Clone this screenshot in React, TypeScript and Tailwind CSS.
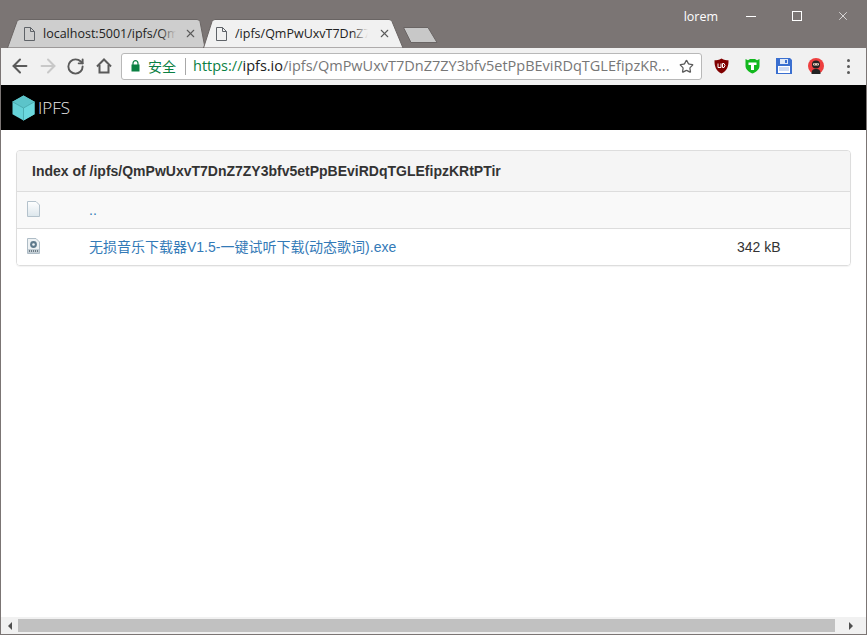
import { ArrowLeft, ArrowRight, RotateCw, Star, X } from 'lucide-react';

function PageIcon() {
  return (
    <svg width="11" height="14" viewBox="0 0 11 14" className="shrink-0" fill="none" stroke="#5f6368" strokeWidth="1">
      <path d="M0.5 0.5H6.5L10.5 4.5V13.5H0.5Z" />
      <path d="M6.5 0.5V4.5H10.5" />
    </svg>
  );
}

function Tab({ title, active }: { title: string; active?: boolean }) {
  return (
    <div className={active ? 'relative z-10 -ml-[2px] flex h-[29px] w-[201px] items-center pl-[13px] pr-[13px]' : 'relative flex h-[29px] w-[198px] items-center pl-[17px] pr-[8px]'}>
      {/* tab outline */}
      <svg className="absolute inset-0 h-full w-full" viewBox={active ? '0 0 201 29' : '0 0 198 29'} preserveAspectRatio="none">
        {active ? (
          <path d="M0.5 29 L9 2.5 Q10 0.5 12 0.5 H186 Q188 0.5 189 2.5 L200 29 Z" fill="#f1f1f1" stroke="#6a6564" />
        ) : (
          <path d="M0.5 29 L10 2.5 Q11 0.5 13 0.5 H190 Q192 0.5 193 2.5 L198 29 Z" fill="#cecece" stroke="#6a6564" />
        )}
      </svg>
      <div className="relative flex min-w-0 flex-1 items-center gap-[8px]">
        <PageIcon />
        <span className={active ? 'relative w-[133px] overflow-hidden whitespace-nowrap pt-[1px] text-[12.5px] text-[#222]' : 'relative w-[135px] overflow-hidden whitespace-nowrap pt-[1px] text-[12.5px] text-[#222]'}>
          {title}
          <span className={active ? 'absolute inset-y-0 right-0 w-4 bg-gradient-to-r from-transparent to-[#f1f1f1]' : 'absolute inset-y-0 right-0 w-4 bg-gradient-to-r from-transparent to-[#cecece]'} />
        </span>
        <X size={13} strokeWidth={2} className="ml-auto shrink-0 text-[#5a5a5a]" />
      </div>
    </div>
  );
}

function NavIcon({ children, width }: { children: React.ReactNode; width: string }) {
  return <div className={`flex shrink-0 items-center justify-center ${width}`}>{children}</div>;
}

function HomeIcon() {
  return (
    <svg width="16" height="16" viewBox="0 0 16 16" fill="none" stroke="#5a5a5a" strokeWidth="2">
      <path d="M1 8.5L8 1.5L15 8.5" />
      <path d="M3.5 7V14.5H12.5V7" />
    </svg>
  );
}

function LockIcon() {
  return (
    <svg width="9" height="12" viewBox="0 0 9 12" className="shrink-0">
      <path d="M2 5V3.2a2.5 2.5 0 0 1 5 0V5" fill="none" stroke="#0b8043" strokeWidth="1.2" />
      <rect x="0.5" y="4.5" width="8" height="7" fill="#0b8043" />
    </svg>
  );
}

function UBlock() {
  return (
    <svg width="15" height="16" viewBox="0 0 15 16">
      <path d="M7.5 0.5C10 2 12.5 2.2 14.5 2.2C14.7 8 13 13 7.5 15.5C2 13 0.3 8 0.5 2.2C2.5 2.2 5 2 7.5 0.5Z" fill="#800000" />
      <path d="M4 5.5V9.5H7V5.5" fill="none" stroke="#fff" strokeWidth="1" />
      <path d="M8.5 5.5H10L11 7.5L10 9.5H8.5Z" fill="none" stroke="#fff" strokeWidth="1" />
    </svg>
  );
}

function TShield() {
  return (
    <svg width="15" height="16" viewBox="0 0 15 16">
      <path d="M0.5 1L3 2.2L5 1H10L12 2.2L14.5 1V8C14.5 11.5 11 14 7.5 15.5C4 14 0.5 11.5 0.5 8Z" fill="#12b81e" />
      <path d="M3.5 4.5H11.5V7H9V12H6V7H3.5Z" fill="#fff" />
    </svg>
  );
}

function Floppy() {
  return (
    <svg width="16" height="16" viewBox="0 0 16 16">
      <path d="M0 0H14L16 2V16H0Z" fill="#3a6fd0" />
      <rect x="4" y="1" width="8" height="5" fill="#dfe8f7" />
      <rect x="9" y="2" width="2" height="3" fill="#3a6fd0" />
      <rect x="2" y="8" width="12" height="7" fill="#fff" />
      <path d="M3 10H13M3 12H13" stroke="#9db6e6" strokeWidth="1" />
    </svg>
  );
}

function Ninja() {
  return (
    <svg width="16" height="16" viewBox="0 0 16 16">
      <circle cx="8" cy="8" r="8" fill="#ee3f3f" />
      <path d="M3.5 16C3.5 12 5 11 8 11C11 11 12.5 12 12.5 16Z" fill="#222" />
      <circle cx="8" cy="6.5" r="4" fill="#222" />
      <rect x="5" y="5.2" width="6" height="2.2" rx="0.8" fill="#f3d9c9" />
      <circle cx="6.6" cy="6.3" r="0.5" fill="#222" />
      <circle cx="9.4" cy="6.3" r="0.5" fill="#222" />
    </svg>
  );
}

function IpfsLogo() {
  return (
    <svg width="23" height="26" viewBox="0 0 23 26" className="shrink-0">
      <path d="M11.5 0.5L22.5 6.8V19.2L11.5 25.5L0.5 19.2V6.8Z" fill="#65d2d8" />
      <path d="M11.5 0.5L22.5 6.8L11.5 13L0.5 6.8Z" fill="#5cc4ca" />
      <path d="M11.5 13V25.5L22.5 19.2V6.8Z" fill="#6bd8de" />
      <path d="M0.5 6.8L11.5 13L22.5 6.8M11.5 13V25.5" fill="none" stroke="#46a4aa" strokeWidth="0.8" />
    </svg>
  );
}

function BlankFile() {
  return (
    <svg width="13" height="16" viewBox="0 0 13 16">
      <defs>
        <linearGradient id="blank" x1="0" y1="0" x2="0" y2="1">
          <stop offset="0" stopColor="#ffffff" />
          <stop offset="1" stopColor="#dce6ec" />
        </linearGradient>
      </defs>
      <path d="M0.5 0.5H9L12.5 4V15.5H0.5Z" fill="url(#blank)" stroke="#b4c2cc" />
    </svg>
  );
}

function ExeFile() {
  return (
    <svg width="13" height="16" viewBox="0 0 13 16">
      <path d="M0.5 0.5H9L12.5 4V15.5H0.5Z" fill="#eef2f4" stroke="#aebcc6" />
      <circle cx="6.5" cy="6.5" r="3.4" fill="#5f7a8c" />
      <circle cx="6.5" cy="6.5" r="1.3" fill="#eef2f4" />
      <rect x="1" y="11" width="11" height="4" fill="#c4ced5" />
      <path d="M2.5 12V14M4.5 12V14M6.5 12V14M8.5 12V14M10.5 12V14" stroke="#55666f" strokeWidth="0.8" />
    </svg>
  );
}

export default function App() {
  return (
    <div className="flex h-[635px] w-[867px] flex-col overflow-hidden border border-[#7b7574] bg-white font-['Liberation_Sans',sans-serif]">
      {/* Title bar */}
      <div className="relative flex h-[47px] shrink-0 items-end bg-[#7b7574] pl-[6px] font-['Open_Sans',sans-serif]">
        <Tab title="localhost:5001/ipfs/Qm" />
        <Tab title="/ipfs/QmPwUxvT7DnZ7" active />
        <svg width="35" height="16" viewBox="0 0 35 16" className="mb-[5px] -ml-[1px]">
          <path d="M0.5 0.5H25L34 15.5H8Z" fill="#c8c8c8" stroke="#6a6564" />
        </svg>
        <div className="absolute right-0 top-0 flex h-[30px] items-center">
          <span className="mr-[10px] mt-[3px] text-[12.5px] text-white">lorem</span>
          <div className="flex w-[46px] justify-center">
            <div className="h-px w-[10px] bg-white" />
          </div>
          <div className="flex w-[46px] justify-center">
            <div className="h-[10px] w-[10px] border border-white" />
          </div>
          <div className="flex w-[46px] justify-center">
            <X size={14} strokeWidth={1.2} className="text-white" />
          </div>
        </div>
      </div>

      {/* Toolbar */}
      <div className="flex h-[37px] shrink-0 items-center bg-[#f1f1f1] pb-[1px] pl-[5px]">
        <NavIcon width="w-[28px]"><ArrowLeft size={22} strokeWidth={2.2} className="text-[#5a5a5a]" /></NavIcon>
        <NavIcon width="w-[27px]"><ArrowRight size={22} strokeWidth={2.2} className="text-[#c8c8c8]" /></NavIcon>
        <NavIcon width="w-[29px]"><RotateCw size={19} strokeWidth={2.4} className="text-[#5a5a5a]" /></NavIcon>
        <NavIcon width="w-[27px]"><HomeIcon /></NavIcon>
        <div className="ml-[4px] flex h-[27px] w-[581px] shrink-0 items-center rounded-[3px] border border-[#b8b8b8] bg-white pl-[9px] pr-[7px]">
          <LockIcon />
          <span className="ml-[8px] shrink-0 whitespace-nowrap font-['Noto_Sans_CJK_SC',sans-serif] text-[14px] text-[#0b8043]">安全</span>
          <div className="ml-[9px] h-[17px] w-px shrink-0 bg-[#a8a8a8]" />
          <span className="ml-[7px] whitespace-nowrap font-['Open_Sans',sans-serif] text-[14.5px] text-[#777]">
            <span className="text-[#0b8043]">https://</span>
            <span className="text-[#222]">ipfs.io</span>
            /ipfs/QmPwUxvT7DnZ7ZY3bfv5etPpBEviRDqTGLEfipzKR...
          </span>
          <Star size={15} strokeWidth={2} className="ml-auto shrink-0 text-[#5a5a5a]" />
        </div>
        <div className="flex flex-1 items-center pl-[3px]">
          <NavIcon width="w-[32px]"><UBlock /></NavIcon>
          <NavIcon width="w-[31px]"><TShield /></NavIcon>
          <NavIcon width="w-[32px]"><Floppy /></NavIcon>
          <NavIcon width="w-[32px]"><Ninja /></NavIcon>
          <NavIcon width="w-[32px]">
            <div className="flex flex-col gap-[3px]">
              <div className="h-[3px] w-[3px] rounded-full bg-[#5a5a5a]" />
              <div className="h-[3px] w-[3px] rounded-full bg-[#5a5a5a]" />
              <div className="h-[3px] w-[3px] rounded-full bg-[#5a5a5a]" />
            </div>
          </NavIcon>
        </div>
      </div>

      {/* Page */}
      <div className="flex min-h-0 flex-1 flex-col">
        <div className="flex h-[45px] shrink-0 items-center gap-[3px] bg-black pl-[11px]">
          <IpfsLogo />
          <span className="font-['Open_Sans',sans-serif] text-[17px] font-light text-[#e8e8e8]">IPFS</span>
        </div>

        <div className="flex-1 px-[15px] pt-[20px]">
          <div className="overflow-hidden rounded border border-[#ddd] text-[14px] text-[#333] shadow-[0_1px_1px_rgba(0,0,0,0.05)]">
            <div className="flex h-[41px] items-center border-b border-[#ddd] bg-[#f5f5f5] pl-[15px] font-bold">
              Index of /ipfs/QmPwUxvT7DnZ7ZY3bfv5etPpBEviRDqTGLEfipzKRtPTir
            </div>
            <div className="flex h-[37px] items-center border-b border-[#ddd] bg-[#f9f9f9] pl-[10px]">
              <div className="mb-[3px] w-[62px]"><BlankFile /></div>
              <span className="text-[#337ab7]">..</span>
            </div>
            <div className="flex h-[36px] items-center bg-white pl-[10px]">
              <div className="mb-[3px] w-[62px]"><ExeFile /></div>
              <span className="w-[648px] font-['Liberation_Sans','Noto_Sans_CJK_SC',sans-serif] text-[#337ab7]">无损音乐下载器V1.5-一键试听下载(动态歌词).exe</span>
              <span>342 kB</span>
            </div>
          </div>
        </div>

        {/* Horizontal scrollbar */}
        <div className="flex h-[17px] shrink-0 items-center bg-[#f1f1f1]">
          <div className="flex w-[17px] justify-center">
            <div className="h-0 w-0 border-y-[4px] border-r-[4px] border-y-transparent border-r-[#505050]" />
          </div>
          <div className="h-[13px] w-[817px] bg-[#c1c1c1]" />
          <div className="flex flex-1 justify-center">
            <div className="h-0 w-0 border-y-[4px] border-l-[4px] border-y-transparent border-l-[#505050]" />
          </div>
        </div>
      </div>
    </div>
  );
}
